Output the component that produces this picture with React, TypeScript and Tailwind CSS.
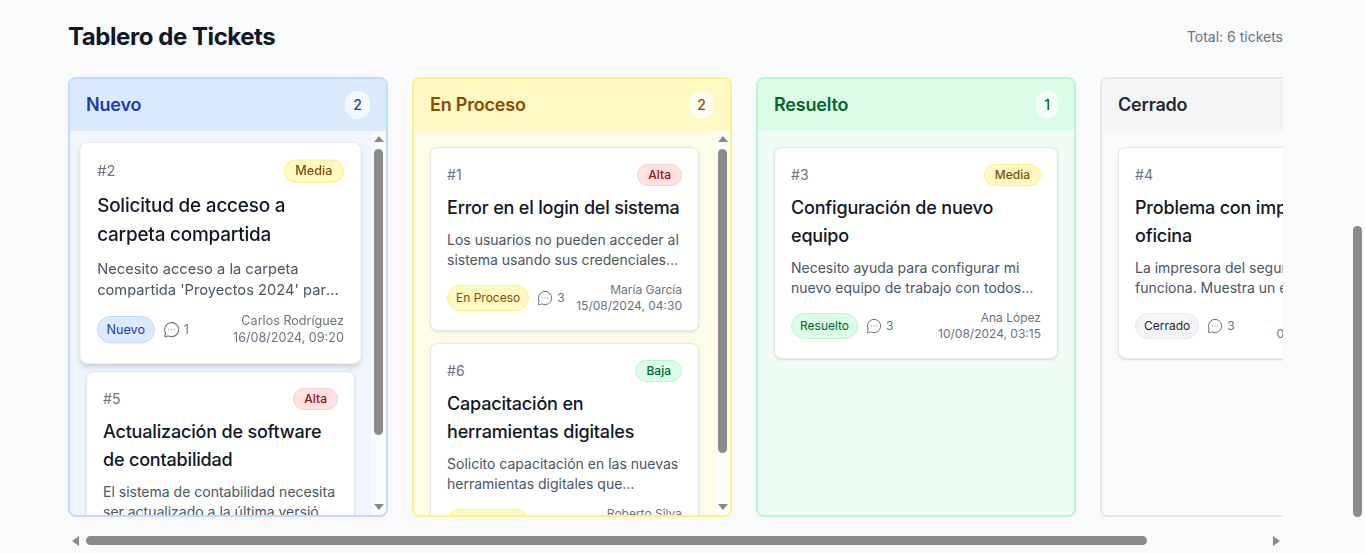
import { MessageCircleMore } from "lucide-react";

type Tone = "blue" | "yellow" | "green" | "gray" | "red";

type Ticket = {
  id: number;
  title: string;
  desc: string;
  priority: string;
  priorityTone: Tone;
  status: string;
  statusTone: Tone;
  comments: number;
  author: string;
  date: string;
  hovered?: boolean;
};

const badgeTones: Record<Tone, string> = {
  blue: "bg-blue-100 border-blue-200 text-blue-800",
  yellow: "bg-yellow-100 border-yellow-200 text-yellow-800",
  green: "bg-green-100 border-green-200 text-green-800",
  gray: "bg-gray-100 border-gray-200 text-gray-800",
  red: "bg-red-100 border-red-200 text-red-800",
};

const columns = [
  {
    name: "Nuevo",
    count: 2,
    box: "border-blue-200",
    head: "bg-blue-100",
    title: "text-blue-800",
    body: "bg-blue-50",
    thumb: "h-[286px]",
    scroll: true,
    tickets: [
      {
        id: 2,
        title: "Solicitud de acceso a carpeta compartida",
        desc: "Necesito acceso a la carpeta compartida 'Proyectos 2024' para poder trabajar en los documentos del equipo",
        priority: "Media",
        priorityTone: "yellow",
        status: "Nuevo",
        statusTone: "blue",
        comments: 1,
        author: "Carlos Rodríguez",
        date: "16/08/2024, 09:20",
        hovered: true,
      },
      {
        id: 5,
        title: "Actualización de software de contabilidad",
        desc: "El sistema de contabilidad necesita ser actualizado a la última versión disponible para cumplir normas",
        priority: "Alta",
        priorityTone: "red",
        status: "Nuevo",
        statusTone: "blue",
        comments: 2,
        author: "Laura Méndez",
        date: "14/08/2024, 11:00",
      },
    ] as Ticket[],
  },
  {
    name: "En Proceso",
    count: 2,
    box: "border-yellow-200",
    head: "bg-yellow-100",
    title: "text-yellow-800",
    body: "bg-yellow-50",
    thumb: "h-[304px]",
    scroll: true,
    tickets: [
      {
        id: 1,
        title: "Error en el login del sistema",
        desc: "Los usuarios no pueden acceder al sistema usando sus credenciales corporativas desde esta mañana",
        priority: "Alta",
        priorityTone: "red",
        status: "En Proceso",
        statusTone: "yellow",
        comments: 3,
        author: "María García",
        date: "15/08/2024, 04:30",
      },
      {
        id: 6,
        title: "Capacitación en herramientas digitales",
        desc: "Solicito capacitación en las nuevas herramientas digitales que implementamos este trimestre en el área",
        priority: "Baja",
        priorityTone: "green",
        status: "En Proceso",
        statusTone: "yellow",
        comments: 1,
        author: "Roberto Silva",
        date: "09/08/2024, 10:45",
      },
    ] as Ticket[],
  },
  {
    name: "Resuelto",
    count: 1,
    box: "border-green-200",
    head: "bg-green-100",
    title: "text-green-800",
    body: "bg-green-50",
    thumb: "",
    scroll: false,
    tickets: [
      {
        id: 3,
        title: "Configuración de nuevo equipo",
        desc: "Necesito ayuda para configurar mi nuevo equipo de trabajo con todos los programas necesarios",
        priority: "Media",
        priorityTone: "yellow",
        status: "Resuelto",
        statusTone: "green",
        comments: 3,
        author: "Ana López",
        date: "10/08/2024, 03:15",
      },
    ] as Ticket[],
  },
  {
    name: "Cerrado",
    count: 1,
    box: "border-gray-200",
    head: "bg-gray-100",
    title: "text-gray-800",
    body: "bg-gray-50",
    thumb: "",
    scroll: false,
    tickets: [
      {
        id: 4,
        title: "Problema con impresora de oficina",
        desc: "La impresora del segundo piso no funciona. Muestra un error de papel atascado constantemente",
        priority: "Baja",
        priorityTone: "green",
        status: "Cerrado",
        statusTone: "gray",
        comments: 3,
        author: "Pedro Ruiz",
        date: "08/08/2024, 06:00",
      },
    ] as Ticket[],
  },
];

function TicketCard({ ticket }: { ticket: Ticket }) {
  return (
    <div
      className={`shrink-0 rounded-lg border border-gray-200 bg-white p-4 ${
        ticket.hovered ? "scale-105 shadow-md" : "shadow-sm"
      }`}
    >
      <div className="mb-2 flex items-center justify-between">
        <span className="text-sm text-gray-500">#{ticket.id}</span>
        <span className={`rounded-full border px-2.5 py-0.5 text-xs leading-4 font-medium ${badgeTones[ticket.priorityTone]}`}>
          {ticket.priority}
        </span>
      </div>
      <h3 className="mb-2 text-lg leading-7 font-medium tracking-[-0.18px] text-gray-900">{ticket.title}</h3>
      <p className="mb-3 line-clamp-2 text-sm text-gray-600">{ticket.desc}</p>
      <div className="flex items-center justify-between">
        <div className="flex items-center gap-2">
          <span className={`rounded-full border px-2 py-1 text-xs leading-4 ${badgeTones[ticket.statusTone]}`}>
            {ticket.status}
          </span>
          <span className="flex items-center gap-1 text-sm text-gray-500">
            <MessageCircleMore className="size-4" strokeWidth={1.5} />
            <span className="text-xs">{ticket.comments}</span>
          </span>
        </div>
        <div className="shrink-0 text-right text-xs text-gray-500">
          <div>{ticket.author}</div>
          <div>{ticket.date}</div>
        </div>
      </div>
    </div>
  );
}

function VerticalBar({ thumb }: { thumb: string }) {
  return (
    <div className="flex w-[15px] shrink-0 flex-col items-center bg-[#fbfbfb]/80 pt-[5px]">
      <span className="size-0 border-x-[5px] border-b-[6px] border-x-transparent border-b-[#8a8a8a]" />
      <span className={`mt-[7px] w-[9px] rounded-full bg-[#8b8b8b] ${thumb}`} />
      <span className="mt-auto mb-[5px] size-0 border-x-[5px] border-t-[6px] border-x-transparent border-t-[#8a8a8a]" />
    </div>
  );
}

function Column({ col }: { col: (typeof columns)[number] }) {
  return (
    <div className={`flex h-[440px] w-80 shrink-0 flex-col overflow-hidden rounded-lg border-2 ${col.box}`}>
      <div className={`flex shrink-0 items-center justify-between px-4 py-3 ${col.head}`}>
        <h2 className={`text-lg leading-7 font-semibold tracking-[-0.2px] ${col.title}`}>{col.name}</h2>
        <span className={`rounded-full bg-white/70 px-2 py-1 text-sm font-medium ${col.title}`}>{col.count}</span>
      </div>
      <div className={`flex min-h-0 flex-1 ${col.body}`}>
        <div className="flex min-w-0 flex-1 flex-col gap-3 overflow-hidden p-4">
          {col.tickets.map((t) => (
            <TicketCard key={t.id} ticket={t} />
          ))}
        </div>
        {col.scroll && <VerticalBar thumb={col.thumb} />}
      </div>
    </div>
  );
}

export default function App() {
  return (
    <div className="flex h-[553px] w-[1365px] overflow-hidden bg-gray-50 font-['Inter',sans-serif]">
      <main className="flex min-w-0 flex-1 flex-col pt-[21px] pr-[67px] pl-[68px]">
        <div className="mb-6 flex h-8 shrink-0 items-center justify-between">
          <h1 className="text-2xl font-bold tracking-[-0.44px] text-gray-900">Tablero de Tickets</h1>
          <span className="text-sm text-gray-500">Total: 6 tickets</span>
        </div>
        <div className="flex gap-6 overflow-hidden">
          {columns.map((col) => (
            <Column key={col.name} col={col} />
          ))}
        </div>
        <div className="mt-4 flex h-[15px] shrink-0 items-center bg-[#fbfbfb] pr-[3px] pl-[4px]">
          <span className="size-0 border-y-[5px] border-r-[7px] border-y-transparent border-r-[#8a8a8a]" />
          <span className="ml-[7px] h-[9px] w-[1061px] rounded-full bg-[#8b8b8b]" />
          <span className="ml-auto size-0 border-y-[5px] border-l-[7px] border-y-transparent border-l-[#8a8a8a]" />
        </div>
      </main>
      <div className="flex w-[15px] shrink-0 flex-col items-center bg-[#fbfbfb] pt-[226px]">
        <span className="h-[291px] w-[9px] rounded-full bg-[#8b8b8b]" />
      </div>
    </div>
  );
}
